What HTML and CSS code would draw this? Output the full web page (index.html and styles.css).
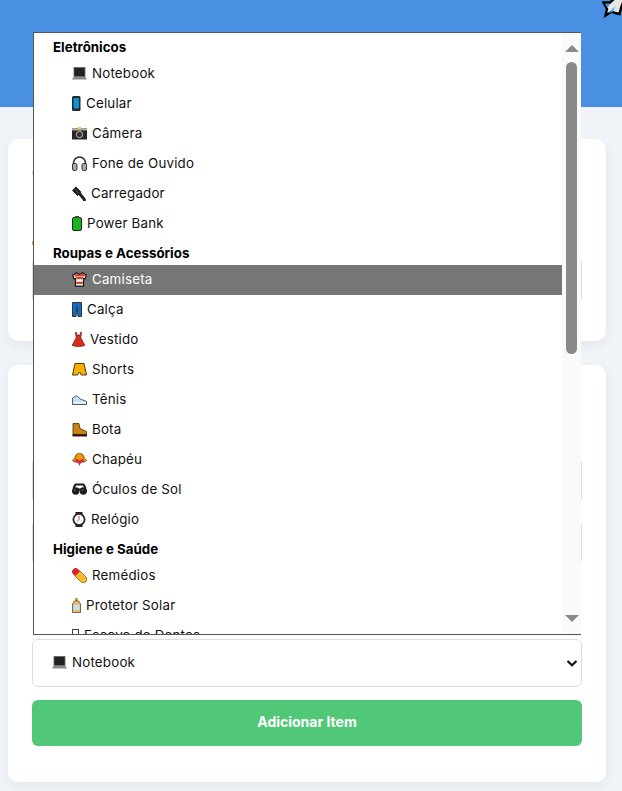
FILE: index.html
```html
<!DOCTYPE html>
<html lang="pt-BR">

<head>
    <meta charset="UTF-8">
    <meta name="viewport" content="width=device-width, initial-scale=1.0">
    <title>Lista de Itens</title>
    <link rel="stylesheet" href="styles.css">
</head>

<body>
    <header class="topbar">
        <svg class="rocket" width="20" height="18" viewBox="0 0 20 18">
            <path d="M1.500 2.500L8 2.500L14 -3L23 -3L19 8L17.500 14L13 13L10 11.500L3.500 15.500L5 9z" fill="#e6e6e6" stroke="#000" stroke-width="2.400"/>
            <path d="M6.500 13L13.500 6L10.500 12z" fill="#35a8ee"/>
            <path d="M3 4L8 4L5.500 8z" fill="#4a90e2"/>
        </svg>
    </header>

    <main class="content">
        <section class="card card-first">
            <div class="card-title"><i class="peek peek-pink"></i></div>
            <div class="card-label"><i class="peek peek-orange"></i></div>
            <div class="input"></div>
        </section>

        <section class="card card-second">
            <div class="input"></div>
            <div class="input input-b"></div>
            <div class="select">
                <svg width="15" height="15" viewBox="0 0 15 15"><rect x="2" y="1.500" width="11" height="9" fill="#222" stroke="#666" stroke-width=".8"/><path d="M1.500 11h12l1.500 2.500H0z" fill="#8a8a8a"/></svg>
                <span>Notebook</span>
                <svg class="chevron" width="12" height="7" viewBox="0 0 12 7"><path d="M1.500 1L6 5.200L10.500 1" fill="none" stroke="#111" stroke-width="2.200"/></svg>
            </div>
            <button class="add-btn">Adicionar Item</button>
        </section>
    </main>

    <div class="popup">
        <div class="list">
            <div class="group">Eletrônicos</div>
            <div class="opt">
                <svg width="15" height="15" viewBox="0 0 15 15"><rect x="2" y="1.500" width="11" height="9" fill="#222" stroke="#666" stroke-width=".8"/><path d="M1.500 11h12l1.500 2.500H0z" fill="#8a8a8a"/></svg>
                <span>Notebook</span>
            </div>
            <div class="opt">
                <svg width="9" height="15" viewBox="0 0 9 15"><rect x="0" y="0" width="8.500" height="15" rx="1.500" fill="#262626"/><rect x="1.500" y="2" width="5.500" height="10.500" fill="#0a93d6"/></svg>
                <span>Celular</span>
            </div>
            <div class="opt">
                <svg width="15" height="15" viewBox="0 0 15 15"><rect x="0" y="2.500" width="15" height="11" fill="#262626"/><rect x="0" y="2.500" width="15" height="2" fill="#aaa"/><rect x="6" y="1" width="3" height="2.500" fill="#f4c430"/><circle cx="7.500" cy="8.500" r="3.200" fill="#333" stroke="#bbb"/></svg>
                <span>Câmera</span>
            </div>
            <div class="opt">
                <svg width="15" height="15" viewBox="0 0 15 15"><path d="M1.500 10V7a6 6 0 0 1 12 0v3" fill="none" stroke="#333" stroke-width="1.700"/><rect x="0.500" y="7.500" width="4.500" height="7" rx="1.500" fill="#aaa" stroke="#333"/><rect x="10" y="7.500" width="4.500" height="7" rx="1.500" fill="#aaa" stroke="#333"/></svg>
                <span>Fone de Ouvido</span>
            </div>
            <div class="opt">
                <svg width="14" height="15" viewBox="0 0 14 15"><path d="M2 2.500L7.500 8" fill="none" stroke="#1c1c1c" stroke-width="5.500"/><path d="M7 7L12 13L13 15" fill="none" stroke="#1c1c1c" stroke-width="3"/><path d="M3 3.500L7 7.500" stroke="#777" stroke-width=".8"/></svg>
                <span>Carregador</span>
            </div>
            <div class="opt">
                <svg width="10" height="15" viewBox="0 0 10 15"><rect x=".5" y="1.500" width="9" height="13" rx="1.500" fill="#19b31b" stroke="#222"/><rect x="3" y="0" width="4" height="2" fill="#444"/></svg>
                <span>Power Bank</span>
            </div>

            <div class="group">Roupas e Acessórios</div>
            <div class="opt selected">
                <svg width="15" height="15" viewBox="0 0 15 15"><path d="M4.500 .8L.8 3L1.800 6.800L3.500 6.300V14.200H11.500V6.300L13.200 6.800L14.200 3L10.500 .8L7.500 2.500z" fill="#fff" stroke="#111" stroke-width="1.200"/><path d="M4.200 5H10.800V7.300H4.200zM4.200 9.800H10.800V12H4.200zM2 2.800L4.500 1.500L7.500 3.200L10.500 1.500L13 2.800L12.500 4.500H2.500z" fill="#d8402c"/></svg>
                <span>Camiseta</span>
            </div>
            <div class="opt">
                <svg width="10" height="15" viewBox="0 0 10 15"><path d="M.5 .5H9.500V14.500H6L5 4L4 14.500H.5z" fill="#0f6cc4" stroke="#333"/></svg>
                <span>Calça</span>
            </div>
            <div class="opt">
                <svg width="13" height="15" viewBox="0 0 13 15"><path d="M4.300 0L5 3H8L8.700 0L9.700 .5L8.800 5.500L13 13.500L6.500 15L0 13.500L4.200 5.500L3.300 .5z" fill="#d12c1e" stroke="#6c160c" stroke-width=".6"/></svg>
                <span>Vestido</span>
            </div>
            <div class="opt">
                <svg width="15" height="15" viewBox="0 0 15 15"><path d="M3 1.500H12L14.500 13H9.500L7.500 10L5.500 13H.5z" fill="#f5b000" stroke="#4a3a10"/></svg>
                <span>Shorts</span>
            </div>
            <div class="opt">
                <svg width="15" height="15" viewBox="0 0 15 15"><path d="M.5 6L4.500 3.500L8.500 7L14.500 9.500V12.500H.5z" fill="#bfe3f0" stroke="#334" stroke-width=".8"/><path d="M1 10.800H14" stroke="#fff" stroke-width="1"/></svg>
                <span>Tênis</span>
            </div>
            <div class="opt">
                <svg width="15" height="15" viewBox="0 0 15 15"><path d="M1 1.500H7L8 6.500L14.500 9.500V12.500H1z" fill="#c9820f" stroke="#4a2f10" stroke-width=".8"/><rect x="0.500" y="12" width="14.500" height="2.500" fill="#2e1d0c"/></svg>
                <span>Bota</span>
            </div>
            <div class="opt">
                <svg width="15" height="15" viewBox="0 0 15 15"><path d="M.5 8.500C1.500 7 3 6.500 3.500 4C4.500 .5 10.500 .5 11.500 4C12 6.500 13.500 7 14.500 8.500C13.500 11 1.500 11 .5 8.500z" fill="#f09a00" stroke="#553a00" stroke-width=".8"/><path d="M3.500 6.500L7.500 8.500L11.500 6.500V10L7.500 9L3.500 10zM5.500 9.500L7.500 14L9.500 9.500z" fill="#d81b60"/></svg>
                <span>Chapéu</span>
            </div>
            <div class="opt">
                <svg width="15" height="15" viewBox="0 0 15 15"><circle cx="3.700" cy="9" r="3.700" fill="#1c1c1c"/><circle cx="11.300" cy="9" r="3.700" fill="#1c1c1c"/><path d="M1.500 6L3.500 2.500H11.500L13.500 6M6 7.500H9" fill="none" stroke="#1c1c1c" stroke-width="2"/><path d="M2 8.500L4 7.500M9.500 8.500L11.500 7.500" stroke="#888" stroke-width=".8"/></svg>
                <span>Óculos de Sol</span>
            </div>
            <div class="opt">
                <svg width="14" height="15" viewBox="0 0 14 15"><path d="M3.500 0H10.500V3H3.500zM3.500 12H10.500V15H3.500z" fill="#222"/><circle cx="7" cy="7.500" r="5.600" fill="#fff" stroke="#2a2a2a" stroke-width="1.800"/><path d="M7 4V7.500L5 9.500" fill="none" stroke="#c33" stroke-width=".9"/></svg>
                <span>Relógio</span>
            </div>

            <div class="group">Higiene e Saúde</div>
            <div class="opt">
                <svg width="15" height="15" viewBox="0 0 15 15"><path d="M1.200 1.200a3.500 3.500 0 0 1 5 0L8 3L3 8L1.200 6.200a3.500 3.500 0 0 1 0-5z" fill="#e0202a"/><path d="M8 3L13.800 8.800a3.500 3.500 0 0 1-5 5L3 8z" fill="#f9b62a" stroke="#5a4210" stroke-width=".6"/></svg>
                <span>Remédios</span>
            </div>
            <div class="opt">
                <svg width="9" height="15" viewBox="0 0 9 15"><rect x="3" y="0" width="3" height="3" fill="#c9a24a"/><path d="M2.500 3H6.500L8.500 6V14.500H.5V6z" fill="#e4bd73" stroke="#5b4a2a" stroke-width=".8"/><rect x="1.500" y="7" width="6" height="5" fill="#bfe3f2"/></svg>
                <span>Protetor Solar</span>
            </div>
            <div class="opt">
                <svg width="7" height="15" viewBox="0 0 7 15"><rect x=".5" y="1.500" width="6" height="11" fill="none" stroke="#444"/></svg>
                <span>Escova de Dentes</span>
            </div>
        </div>
        <div class="scrollbar">
            <div class="arrow arrow-up"></div>
            <div class="thumb"></div>
            <div class="arrow arrow-down"></div>
        </div>
    </div>
</body>

</html>
```

FILE: styles.css
```css
* {
    margin: 0;
    padding: 0;
    box-sizing: border-box;
}

html,
body {
    height: 791px;
    overflow: hidden;
}

body {
    background: #f0f4f8;
    font-family: "Inter", "Liberation Sans", sans-serif;
    font-size: 13.33px;
    color: #111;
}

.topbar {
    height: 107px;
    background: #4a90e2;
    position: relative;
    overflow: hidden;
}

.rocket {
    position: absolute;
    right: 0;
    top: 0;
}

.content {
    padding: 32px 16px 0 8px;
    display: flex;
    flex-direction: column;
    gap: 24px;
}

.card {
    background: #fff;
    border-radius: 10px;
    box-shadow: 0 4px 12px rgba(0, 0, 0, 0.06);
    padding: 24px;
}

.card-first {
    height: 202px;
}

.card-second {
    height: 417px;
    padding-top: 93px;
}

.card-title {
    height: 20px;
    padding-top: 8px;
}

.card-label {
    height: 75px;
    padding-top: 58px;
}

.peek {
    display: block;
    width: 1px;
    height: 4px;
}

.peek-pink {
    background: #f0d4d4;
}

.peek-orange {
    background: #f0a040;
}

.input {
    height: 45px;
    border: 1px solid #ddd;
    border-radius: 6px;
    background: #fff;
}

.input-b {
    margin-top: 17px;
}

.select {
    display: flex;
    align-items: center;
    gap: 5px;
    height: 48px;
    margin-top: 74px;
    padding: 0 3px 2px 19px;
    border: 1px solid #ddd;
    border-radius: 6px;
    background: #fff;
    letter-spacing: 0.2px;
}

.chevron {
    margin-left: auto;
    margin-top: 2px;
}

.add-btn {
    display: block;
    width: 100%;
    height: 46px;
    margin-top: 13px;
    padding-bottom: 3px;
    border: none;
    border-radius: 6px;
    background: #50c878;
    color: #fff;
    font-family: inherit;
    font-size: 14px;
    font-weight: 700;
}

.popup {
    position: absolute;
    left: 33px;
    top: 32px;
    width: 548px;
    height: 603px;
    display: flex;
    background: #fff;
    border: 1px solid #555;
    border-right: none;
}

.list {
    flex: 1;
    overflow: hidden;
}

.group {
    height: 26px;
    padding: 6px 0 0 19px;
    font-weight: 700;
    line-height: 16px;
    color: #000;
}

.opt {
    display: flex;
    align-items: center;
    gap: 5px;
    height: 30px;
    padding: 0 0 2px 38px;
    letter-spacing: 0.2px;
}

.selected {
    background: #767676;
    color: #fff;
}

.scrollbar {
    width: 19px;
    background: #fafafa;
    display: flex;
    flex-direction: column;
    align-items: center;
    padding-top: 12px;
}

.arrow {
    width: 0;
    height: 0;
    border-left: 7px solid transparent;
    border-right: 7px solid transparent;
}

.arrow-up {
    border-bottom: 7px solid #8a8a8a;
}

.arrow-down {
    margin-top: 261px;
    border-top: 7px solid #8a8a8a;
}

.thumb {
    width: 11px;
    height: 292px;
    margin-top: 10px;
    border-radius: 6px;
    background: #8a8a8a;
}
```
